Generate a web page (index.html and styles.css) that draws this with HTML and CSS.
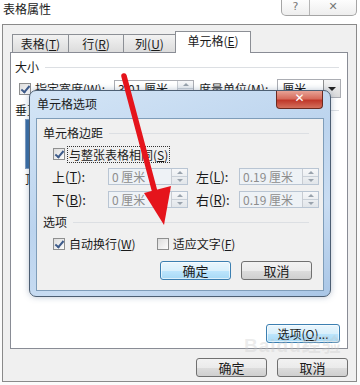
FILE: index.html
```html
<!DOCTYPE html>
<html lang="zh-CN">
<head>
    <meta charset="UTF-8">
    <title>表格属性</title>
    <link rel="stylesheet" href="styles.css">
</head>
<body>

    <div class="titlebar">
        <span class="title">表格属性</span>
        <div class="caption-btns">
            <span class="cap-btn">?</span>
            <span class="cap-btn cap-close">✕</span>
        </div>
    </div>

    <div class="window">
        <div class="tabs">
            <div class="tab">表格(<u>T</u>)</div>
            <div class="tab">行(<u>R</u>)</div>
            <div class="tab">列(<u>U</u>)</div>
            <div class="tab active">单元格(<u>E</u>)</div>
        </div>

        <div class="panel">
            <div class="group-head"><span>大小</span><i></i></div>
            <div class="size-row">
                <span class="check on"></span>
                <span class="lbl">指定宽度(<u>W</u>):</span>
                <span class="spin"><span class="val">3.01 厘米</span><span class="arrows"></span></span>
                <span class="lbl">度量单位(<u>M</u>):</span>
                <span class="select"><span class="val">厘米</span><span class="drop"></span></span>
            </div>
            <div class="group-head"><span>垂直对齐方式</span><i></i></div>
            <div class="align-row">
                <div class="align-item"><div class="align-box"></div><span>顶端对齐(<u>P</u>)</span></div>
                <div class="align-item"><div class="align-box"></div><span>居中(<u>C</u>)</span></div>
                <div class="align-item"><div class="align-box"></div><span>底端对齐(<u>B</u>)</span></div>
            </div>
            <div class="panel-foot">
                <span class="btn btn-blue">选项(<u>O</u>)...</span>
            </div>
        </div>

        <div class="window-foot">
            <span class="btn">确定</span>
            <span class="btn">取消</span>
        </div>
    </div>

    <!-- child dialog on top of the window -->
    <div class="dialog">
        <div class="dlg-title">
            <span>单元格选项</span>
            <span class="dlg-close">✕</span>
        </div>
        <div class="dlg-body">
            <div class="group-head"><span>单元格边距</span><i></i></div>
            <div class="dlg-row first">
                <span class="check on"></span>
                <span class="focus">与整张表格相同(<u>S</u>)</span>
            </div>
            <div class="margin-row">
                <span class="lbl">上(<u>T</u>):</span>
                <span class="spin disabled"><span class="val">0 厘米</span><span class="arrows"></span></span>
                <span class="lbl">左(<u>L</u>):</span>
                <span class="spin disabled"><span class="val">0.19 厘米</span><span class="arrows"></span></span>
            </div>
            <div class="margin-row">
                <span class="lbl">下(<u>B</u>):</span>
                <span class="spin disabled"><span class="val">0 厘米</span><span class="arrows"></span></span>
                <span class="lbl">右(<u>R</u>):</span>
                <span class="spin disabled"><span class="val">0.19 厘米</span><span class="arrows"></span></span>
            </div>
            <div class="group-head"><span>选项</span><i></i></div>
            <div class="dlg-row opts">
                <span class="check on"></span>
                <span class="opt-lbl">自动换行(<u>W</u>)</span>
                <span class="check"></span>
                <span>适应文字(<u>F</u>)</span>
            </div>
            <div class="dlg-btns">
                <span class="btn btn-blue">确定</span>
                <span class="btn">取消</span>
            </div>
        </div>
    </div>

    <div class="watermark">Bai<span>du</span>经验</div>

    <svg class="arrow" width="360" height="385" viewBox="0 0 360 385">
        <line x1="124" y1="76" x2="157" y2="200" stroke="#e5141c" stroke-width="5.5" stroke-linecap="round"/>
        <polygon points="144,193 171,186 164,225" fill="#e5141c"/>
    </svg>

</body>
</html>
```

FILE: styles.css
```css
body {
    margin: 0;
    width: 360px;
    height: 385px;
    overflow: hidden;
    position: relative;
    background: #fbfbfb;
    font-family: 'Noto Sans CJK SC', 'Liberation Sans', sans-serif;
    font-size: 12px;
    line-height: 16px;
    color: #1a1a1a;
}

u {
    text-decoration: underline;
    text-underline-offset: 1px;
}

.titlebar {
    height: 24px;
    display: flex;
    justify-content: space-between;
    align-items: flex-start;
    background: #fff;
}

.title {
    padding: 1px 0 0 3px;
    font-size: 12px;
}

.caption-btns {
    display: flex;
    margin-right: 3px;
    border: 1px solid #a5a5a5;
    border-top: none;
    border-radius: 0 0 5px 5px;
    height: 15px;
    background: linear-gradient(#fdfdfd, #eeeeee);
}

.cap-btn {
    width: 27px;
    text-align: center;
    font-family: 'DejaVu Sans', sans-serif;
    font-size: 11px;
    line-height: 14px;
    color: #777;
}

.cap-close {
    width: 46px;
    border-left: 1px solid #b5b5b5;
}

.window {
    box-sizing: border-box;
    width: 355px;
    height: 358px;
    margin-left: 2px;
    border: 1px solid #8a8a8a;
    background: #f0f0f0;
    padding: 6px 8px 0 7px;
    display: flex;
    flex-direction: column;
}

.tabs {
    display: flex;
    align-items: flex-end;
    height: 21px;
    padding-left: 2px;
    position: relative;
    z-index: 1;
}

.tab {
    box-sizing: border-box;
    height: 18px;
    border: 1px solid #8c8f95;
    border-bottom: none;
    border-right: none;
    background: linear-gradient(#f2f2f2, #dcdcdc);
    text-align: center;
    line-height: 17px;
}

.tab:nth-child(1) { width: 56px; }
.tab:nth-child(2) { width: 55px; }
.tab:nth-child(3) { width: 52px; }

.tab.active {
    width: 76px;
    height: 22px;
    margin-bottom: -1px;
    background: #fff;
    border-right: 1px solid #8c8f95;
    line-height: 18px;
}

.panel {
    box-sizing: border-box;
    width: 338px;
    height: 297px;
    border: 1px solid #898c95;
    background: #fff;
    padding: 6px 4px 5px 4px;
    display: flex;
    flex-direction: column;
}

.group-head {
    display: flex;
    align-items: center;
    height: 16px;
    white-space: nowrap;
}

.group-head i {
    flex: 1;
    height: 1px;
    margin: 0 4px 0 6px;
    background: #dcdfe3;
}

.size-row {
    display: flex;
    align-items: center;
    height: 19px;
    margin-top: 4px;
    padding-left: 4px;
    white-space: nowrap;
}

.size-row > * {
    flex: none;
}

.size-row .lbl {
    margin-left: 4px;
}

.size-row .spin {
    margin-left: 9px;
}

.size-row .spin + .lbl {
    margin-left: 5px;
}

.check {
    box-sizing: border-box;
    flex: none;
    width: 12px;
    height: 12px;
    border: 1px solid #8e8f8f;
    background: linear-gradient(135deg, #dcdcdc, #fdfdfd);
    position: relative;
}

.check.on::after {
    content: '';
    position: absolute;
    left: 3px;
    top: 0px;
    width: 3px;
    height: 7px;
    border: solid #3e5b8a;
    border-width: 0 2px 2px 0;
    transform: rotate(40deg);
}

.spin {
    box-sizing: border-box;
    display: flex;
    flex: none;
    width: 80px;
    height: 17px;
    border: 1px solid #abadb3;
    background: #fff;
}

.spin .val {
    flex: 1;
    padding-left: 3px;
    line-height: 15px;
    white-space: nowrap;
    overflow: hidden;
}

.spin .arrows {
    width: 15px;
    border-left: 1px solid #c8ccd2;
    background:
        linear-gradient(#c9d0d8, #c9d0d8) 0 7px / 100% 1px no-repeat,
        linear-gradient(#f6f7f9, #e2e6ea);
    position: relative;
}

.spin .arrows::before,
.spin .arrows::after {
    content: '';
    position: absolute;
    left: 5px;
    border: 3px solid transparent;
}

.spin .arrows::before {
    top: -1px;
    border-bottom-color: #9aa3ad;
}

.spin .arrows::after {
    bottom: -1px;
    border-top-color: #9aa3ad;
}

.spin.disabled {
    border-color: #b9c5d3;
    background: #eef2f6;
    color: #8d8d8d;
}

.select {
    box-sizing: border-box;
    display: flex;
    width: 64px;
    height: 19px;
    margin-left: 9px;
    border: 1px solid #abadb3;
    background: #fff;
}

.select .val {
    flex: 1;
    padding-left: 4px;
    line-height: 17px;
}

.select .drop {
    width: 16px;
    border-left: 1px solid #8e8f8f;
    background: linear-gradient(#f4f4f4, #dadada);
    position: relative;
}

.select .drop::after {
    content: '';
    position: absolute;
    left: 4px;
    top: 7px;
    border: 4px solid transparent;
    border-top: 4px solid #222;
}

.size-row + .group-head {
    margin-top: 4px;
}

.align-row {
    display: flex;
    gap: 30px;
    margin-top: 1px;
    padding-left: 10px;
    white-space: nowrap;
}

.align-item {
    display: flex;
    flex-direction: column;
    gap: 2px;
}

.align-box {
    width: 48px;
    height: 48px;
    border: 1px solid #7e9cc2;
    background: linear-gradient(90deg, #3a6ea5 0 4px, #dfe8f3 4px);
}

.panel-foot {
    margin-top: auto;
    display: flex;
    justify-content: flex-end;
    padding-right: 3px;
}

.btn {
    box-sizing: border-box;
    display: inline-flex;
    justify-content: center;
    align-items: center;
    width: 71px;
    height: 19px;
    border: 1px solid #707070;
    border-radius: 3px;
    background: linear-gradient(#f2f2f2 0, #ebebeb 50%, #dddddd 50%, #cfcfcf 100%);
    font-size: 13px;
    white-space: nowrap;
}

.btn-blue {
    border-color: #3c7fb1;
    background: linear-gradient(#eaf6fd 0, #d9f0fc 50%, #bee6fd 50%, #a7d9f5 100%);
    box-shadow: inset 0 0 0 1px rgba(255, 255, 255, 0.6);
}

.panel-foot .btn {
    width: 74px;
    font-size: 12px;
}

.window-foot {
    display: flex;
    justify-content: flex-end;
    gap: 10px;
    padding: 9px 0 0 0;
}

/* child dialog floating over the window */
.dialog {
    position: absolute;
    left: 29px;
    top: 90px;
    box-sizing: border-box;
    width: 302px;
    height: 207px;
    border: 1px solid #4d5f73;
    border-radius: 7px;
    background: linear-gradient(160deg, #d4e5f6 0%, #bcd4ee 45%, #c8dcf2 70%, #a9c6e6 100%);
    padding: 0 6px 6px 6px;
    box-shadow: 0 0 6px rgba(60, 90, 130, 0.35);
}

.dlg-title {
    height: 27px;
    display: flex;
    justify-content: space-between;
    align-items: flex-start;
}

.dlg-title span:first-child {
    padding: 5px 0 0 1px;
    font-size: 12px;
    color: #1b1b1b;
}

.dlg-close {
    width: 45px;
    height: 17px;
    margin-right: 1px;
    border: 1px solid #6b2a20;
    border-top: none;
    border-radius: 0 0 4px 4px;
    background: linear-gradient(#e8a396 0, #d66c5c 45%, #c0382a 55%, #d4705c 100%);
    color: #fff;
    text-align: center;
    font-family: 'DejaVu Sans', sans-serif;
    font-size: 12px;
    font-weight: bold;
    line-height: 15px;
}

.dlg-body {
    box-sizing: border-box;
    height: 173px;
    border: 1px solid #7f9db9;
    background: #f0f0f0;
    padding: 6px 10px 0 6px;
}

.dlg-row {
    display: flex;
    align-items: center;
    padding-left: 10px;
    white-space: nowrap;
}

.dlg-row.first {
    margin-top: 4px;
    height: 18px;
}

.focus {
    margin-left: 2px;
    padding: 0 1px;
    border: 1px dotted #333;
    line-height: 15px;
}

.margin-row {
    display: flex;
    align-items: center;
    margin-top: 5px;
    padding-left: 9px;
    white-space: nowrap;
}

.margin-row + .margin-row {
    margin-top: 6px;
}

.margin-row .lbl {
    flex: none;
    width: 56px;
    font-size: 13px;
}

.margin-row .spin + .lbl {
    width: 43px;
    margin-left: 8px;
}

.margin-row + .group-head {
    margin-top: 6px;
}

.dlg-row.opts {
    margin-top: 5px;
    height: 18px;
}

.opts .check + span {
    margin-left: 4px;
}

.opts .opt-lbl {
    margin-right: 21px;
}

.dlg-btns {
    display: flex;
    justify-content: flex-end;
    gap: 10px;
    margin-top: 8px;
    padding-right: 1px;
}

.watermark {
    position: absolute;
    left: 244px;
    top: 338px;
    font-family: 'Liberation Sans', 'Noto Sans CJK SC', sans-serif;
    font-size: 19px;
    font-weight: bold;
    color: rgba(200, 200, 200, 0.35);
    letter-spacing: 1px;
}

.arrow {
    position: absolute;
    left: 0;
    top: 0;
    pointer-events: none;
}
```
